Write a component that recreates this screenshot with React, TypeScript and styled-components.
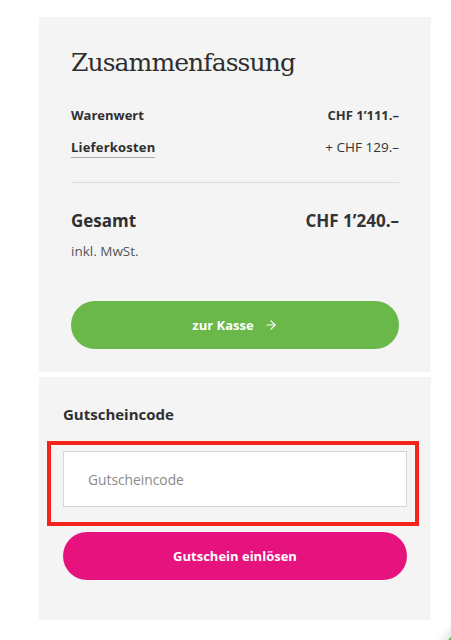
import styled, { createGlobalStyle } from "styled-components"
import { ArrowRight } from "lucide-react"

const GlobalStyle = createGlobalStyle`
  html, body {
    margin: 0;
    padding: 0;
    background: #ffffff;
  }
  body {
    font-family: "Open Sans", "Liberation Sans", sans-serif;
    color: #333333;
    overflow: hidden;
  }
`

const Page = styled.div`
  position: relative;
  width: 451px;
  height: 640px;
  padding: 17px 0 0 39px;
  box-sizing: border-box;
  overflow: hidden;
`

const Column = styled.div`
  width: 392px;
  display: flex;
  flex-direction: column;
  gap: 5px;
`

const Panel = styled.section<{ $pad: string }>`
  background: #f4f4f4;
  padding: ${(p) => p.$pad};
  display: flex;
  flex-direction: column;
`

const Title = styled.h2`
  margin: 0;
  font-family: "DejaVu Serif", "Liberation Serif", serif;
  font-weight: 400;
  font-size: 25px;
  line-height: 32px;
  letter-spacing: -0.9px;
  color: #2e2e2e;
`

const Row = styled.div<{ $top: number; $size: number; $lh: number }>`
  display: flex;
  justify-content: space-between;
  align-items: flex-start;
  margin-top: ${(p) => p.$top}px;
  font-size: ${(p) => p.$size}px;
  line-height: ${(p) => p.$lh}px;
`

const Label = styled.span`
  font-weight: 700;
  color: #2f2f2f;
`

const LinkLabel = styled.span`
  display: inline-block;
  height: 20px;
  font-weight: 700;
  letter-spacing: 0.2px;
  color: #2f2f2f;
  border-bottom: 1px solid #a8a8a8;
`

const Amount = styled.span<{ $bold?: boolean }>`
  font-weight: ${(p) => (p.$bold ? 700 : 400)};
  font-size: ${(p) => (p.$bold ? "1em" : "1.04em")};
  color: #333333;
`

const Divider = styled.hr`
  margin: 24px 0 0;
  border: none;
  border-top: 1px solid #dcdcdc;
`

const Note = styled.div`
  margin-top: 8px;
  font-size: 13.5px;
  line-height: 20px;
  color: #555555;
`

const PillButton = styled.button<{ $bg: string; $top: number }>`
  margin-top: ${(p) => p.$top}px;
  height: 48px;
  border: none;
  border-radius: 24px;
  background: ${(p) => p.$bg};
  color: #ffffff;
  font-family: "Open Sans", "Liberation Sans", sans-serif;
  font-weight: 700;
  font-size: 13px;
  display: flex;
  align-items: center;
  justify-content: center;
  gap: 10px;
  cursor: pointer;
`

const SectionTitle = styled.h3`
  margin: 0;
  font-size: 15px;
  line-height: 22px;
  font-weight: 700;
  color: #2f2f2f;
`

const InputWrap = styled.div`
  position: relative;
  margin-top: 26px;
`

const CodeInput = styled.input`
  width: 100%;
  height: 56px;
  box-sizing: border-box;
  border: 1px solid #d6d6d6;
  background: #ffffff;
  padding: 0 24px;
  font-family: "Open Sans", "Liberation Sans", sans-serif;
  font-size: 13.8px;
  color: #333333;
  outline: none;

  &::placeholder {
    color: #8a8a8a;
  }
`

const Highlight = styled.div`
  position: absolute;
  top: -10px;
  left: -16px;
  right: -12px;
  bottom: -19px;
  border: 4px solid #f3241c;
  pointer-events: none;
`

const FloatingBubble = styled.div`
  position: absolute;
  left: 443px;
  top: 627px;
  width: 60px;
  height: 60px;
  border-radius: 50%;
  background: #6ab74a;
  box-shadow: 0 0 10px 4px rgba(0, 0, 0, 0.12);
`

const App = () => (
  <Page>
    <GlobalStyle />
    <Column>
      <Panel $pad="30px 32px 23px">
        <Title>Zusammenfassung</Title>
        <Row $top={26} $size={13} $lh={20}>
          <Label>Warenwert</Label>
          <Amount $bold>CHF 1’111.–</Amount>
        </Row>
        <Row $top={12} $size={13} $lh={20}>
          <LinkLabel>Lieferkosten</LinkLabel>
          <Amount>+ CHF 129.–</Amount>
        </Row>
        <Divider />
        <Row $top={26} $size={17} $lh={24}>
          <Label>Gesamt</Label>
          <Amount $bold>CHF 1’240.–</Amount>
        </Row>
        <Note>inkl. MwSt.</Note>
        <PillButton $bg="#6ab74a" $top={40}>
          zur Kasse <ArrowRight size={14} strokeWidth={2} />
        </PillButton>
      </Panel>
      <Panel $pad="26px 24px 40px">
        <SectionTitle>Gutscheincode</SectionTitle>
        <InputWrap>
          <CodeInput placeholder="Gutscheincode" />
          <Highlight />
        </InputWrap>
        <PillButton $bg="#e6127d" $top={25}>
          Gutschein einlösen
        </PillButton>
      </Panel>
    </Column>
    <FloatingBubble />
  </Page>
)

export default App
